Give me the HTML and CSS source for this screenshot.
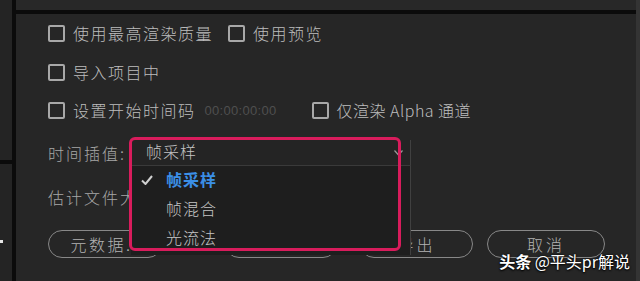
FILE: index.html
```html
<!DOCTYPE html>
<html lang="zh-CN">
<head>
  <meta charset="UTF-8">
  <title>导出设置</title>
  <link rel="stylesheet" href="styles.css">
</head>
<body>
  <div class="frame">
    <div class="sidebar">
      <div class="sidebar-top"></div>
      <div class="sidebar-rule"></div>
      <div class="sidebar-tick"></div>
    </div>
    <div class="vline"></div>

    <div class="main">
      <div class="top-strip"></div>
      <div class="hline"></div>

      <div class="panel">
        <div class="row row-1">
          <label class="check"><span class="box"></span>使用最高渲染质量</label>
          <label class="check check-next"><span class="box"></span>使用预览</label>
        </div>

        <div class="row row-2">
          <label class="check"><span class="box"></span>导入项目中</label>
        </div>

        <div class="row row-3">
          <label class="check"><span class="box"></span>设置开始时间码</label>
          <span class="timecode">00:00:00:00</span>
          <label class="check check-alpha"><span class="box"></span>仅渲染 Alpha 通道</label>
        </div>

        <div class="row row-4">
          <span class="field-label">时间插值:</span>
          <div class="select">
            <span class="select-value">帧采样</span>
            <svg class="chevron" width="9" height="6" viewBox="0 0 9 6">
              <polyline points="0.5,0.5 4.5,5 8.5,0.5" fill="none" stroke="#9a9a9a" stroke-width="1.2"/>
            </svg>

            <ul class="menu">
              <li class="menu-item selected">
                <svg class="tick" width="12" height="10" viewBox="0 0 12 10">
                  <polyline points="1,5.5 4.5,9 11,1" fill="none" stroke="#d0d0d0" stroke-width="2"/>
                </svg>
                帧采样
              </li>
              <li class="menu-item">帧混合</li>
              <li class="menu-item">光流法</li>
            </ul>

            <div class="highlight"></div>
          </div>
        </div>

        <div class="row row-5">
          <span class="field-label">估计文件大小:</span>
        </div>

        <div class="buttons">
          <button class="pill pill-meta">元数据...</button>
          <button class="pill pill-queue">队列</button>
          <button class="pill pill-export">导出</button>
          <button class="pill pill-cancel">取消</button>
        </div>

        <div class="watermark"><b>头条</b> @平头pr解说</div>
      </div>
    </div>

    <div class="edge"></div>
  </div>
</body>
</html>
```

FILE: styles.css
```css
* {
  box-sizing: border-box;
}

body {
  margin: 0;
  width: 640px;
  height: 281px;
  overflow: hidden;
  background: #262626;
  font-family: "Noto Sans CJK SC", "Noto Sans", sans-serif;
  font-weight: 300;
  color: #bdbdbd;
}

.frame {
  display: flex;
  height: 281px;
}

/* left dock */
.sidebar {
  width: 12px;
  background: #242424;
  display: flex;
  flex-direction: column;
}

.sidebar-top {
  height: 160px;
}

.sidebar-rule {
  height: 4px;
  background: #0b0b0b;
}

.sidebar-tick {
  width: 3px;
  height: 3px;
  margin-top: 76px;
  background: #e6e6e6;
}

.vline {
  width: 4px;
  background: #0b0b0b;
}

.main {
  flex: 1;
  display: flex;
  flex-direction: column;
}

.top-strip {
  height: 10px;
  background: #282828;
}

.hline {
  height: 4px;
  background: #0b0b0b;
}

.edge {
  width: 4px;
  background: #343434;
}

/* settings panel */
.panel {
  position: relative;
  flex: 1;
  padding: 8px 0 0 32px;
  background: #262626;
}

.row {
  display: flex;
  align-items: center;
  height: 22px;
  font-size: 16px;
  letter-spacing: 1.5px;
  white-space: nowrap;
}

.row-2 { margin-top: 17px; }
.row-3 { margin-top: 16px; }
.row-4 { margin-top: 19px; height: 25px; }
.row-5 { margin-top: 21px; }

.check {
  display: flex;
  align-items: center;
}

.box {
  width: 17px;
  height: 17px;
  margin-right: 8px;
  border: 2px solid #a8a8a8;
  border-radius: 2px;
}

.check-next {
  margin-left: 15px;
}

.timecode {
  margin-left: 9px;
  font-family: "Liberation Sans", sans-serif;
  font-size: 13px;
  letter-spacing: 0.3px;
  color: #4f4f4f;
}

.check-alpha {
  margin-left: 35px;
  letter-spacing: 0.5px;
}

.field-label {
  color: #a6a6a6;
  letter-spacing: 2px;
}

/* time interpolation dropdown */
.select {
  position: relative;
  width: 280px;
  height: 25px;
  margin-left: 5px;
  padding: 0 7px 3px 15px;
  display: flex;
  align-items: center;
  justify-content: space-between;
  background: #242424;
  border-right: 1px solid #404040;
  letter-spacing: 1px;
  color: #c4c4c4;
}

.chevron {
  margin-top: 3px;
}

.menu {
  position: absolute;
  top: 25px;
  left: 0;
  width: 280px;
  height: 90px;
  margin: 0;
  padding: 0;
  list-style: none;
  background: #1e1e1e;
  border-top: 1px solid #3a3a3a;
  border-right: 1px solid #404040;
  z-index: 2;
}

.menu-item {
  position: relative;
  height: 29px;
  padding: 0 0 4px 35px;
  display: flex;
  align-items: center;
  color: #c4c4c4;
}

.menu-item.selected {
  color: #3b8fe6;
  font-weight: bold;
}

.tick {
  position: absolute;
  left: 10px;
  top: 9px;
}

.highlight {
  position: absolute;
  left: -2px;
  top: -3px;
  width: 272px;
  height: 114px;
  border: 3px solid #d81c5c;
  border-radius: 6px;
  z-index: 3;
}

/* buttons */
.buttons {
  display: flex;
  margin-top: 22px;
}

.pill {
  height: 28px;
  background: transparent;
  border: 1.5px solid #888888;
  border-radius: 14px;
  color: #b2b2b2;
  font-family: "Noto Sans CJK SC", "Noto Sans", sans-serif;
  font-weight: 300;
  font-size: 16px;
  letter-spacing: 3px;
  padding: 0;
}

.pill-meta { width: 114px; letter-spacing: 2.5px; padding-left: 6px; }
.pill-queue { width: 112px; margin-left: 63px; }
.pill-export { width: 113px; margin-left: 23px; }
.pill-cancel { width: 118px; margin-left: 14px; }

.watermark {
  position: absolute;
  right: 6px;
  bottom: 8px;
  font-size: 16px;
  font-weight: 400;
  color: #ffffff;
  text-shadow: 0 0 2px #000, 0 1px 2px #000;
  white-space: nowrap;
}

.watermark b {
  font-weight: bold;
}
```
